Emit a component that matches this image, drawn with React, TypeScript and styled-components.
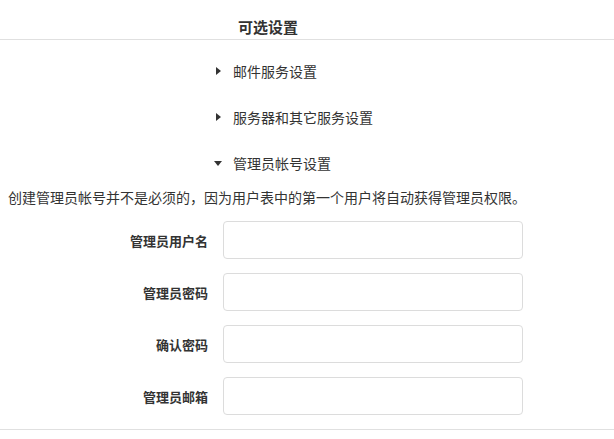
import React, { FC } from "react";
import styled, { createGlobalStyle } from "styled-components";

const GlobalStyle = createGlobalStyle`
  body {
    margin: 0;
    background: #fff;
    color: #333;
    font-family: "Noto Sans CJK SC", "Noto Sans", sans-serif;
    font-size: 14px;
  }
`;

const Page = styled.div`
  width: 614px;
`;

const Header = styled.div`
  padding: 16px 0 1px 238px;
  line-height: 22px;
  font-size: 15px;
  font-weight: 700;
  color: #333;
  border-bottom: 1px solid #e0e0e0;
`;

const SectionList = styled.ul`
  list-style: none;
  margin: 0;
  padding: 8px 0 0 213px;
`;

const SectionItem = styled.li`
  display: flex;
  align-items: center;
  height: 46px;
  line-height: 20px;
  cursor: pointer;
`;

const Caret = styled.span`
  display: inline-flex;
  align-items: center;
  justify-content: center;
  width: 10px;
  margin-right: 10px;
`;

const Description = styled.p`
  margin: 1px 0 0;
  padding-left: 8px;
  line-height: 20px;
`;

const Form = styled.div`
  display: flex;
  flex-direction: column;
  gap: 14px;
  padding: 14px 0 14px 8px;
  border-bottom: 1px solid #e0e0e0;
`;

const Row = styled.label`
  display: flex;
  align-items: center;
`;

const Label = styled.span`
  width: 200px;
  padding-right: 15px;
  text-align: right;
  font-size: 13px;
  font-weight: 700;
  color: #333;
`;

const Input = styled.input`
  box-sizing: border-box;
  width: 300px;
  height: 38px;
  border: 1px solid #dcdcdc;
  border-radius: 4px;
  padding: 0 10px;
  background: #fff;
  font: inherit;
  outline: none;
`;

const sections = [
  { title: "邮件服务设置", open: false },
  { title: "服务器和其它服务设置", open: false },
  { title: "管理员帐号设置", open: true },
];

const fields = [
  { label: "管理员用户名", type: "text" },
  { label: "管理员密码", type: "password" },
  { label: "确认密码", type: "password" },
  { label: "管理员邮箱", type: "email" },
];

const CaretIcon: FC<{ open: boolean }> = ({ open }) =>
  open ? (
    <svg width="8" height="5" viewBox="0 0 8 5">
      <path d="M0 0h8L4 5z" fill="#333" />
    </svg>
  ) : (
    <svg width="5" height="8" viewBox="0 0 5 8">
      <path d="M0 0l5 4-5 4z" fill="#333" />
    </svg>
  );

const App: FC = () => (
  <Page>
    <GlobalStyle />
    <Header>可选设置</Header>
    <SectionList>
      {sections.map((s) => (
        <SectionItem key={s.title}>
          <Caret>
            <CaretIcon open={s.open} />
          </Caret>
          {s.title}
        </SectionItem>
      ))}
    </SectionList>
    <Description>
      创建管理员帐号并不是必须的，因为用户表中的第一个用户将自动获得管理员权限。
    </Description>
    <Form>
      {fields.map((f) => (
        <Row key={f.label}>
          <Label>{f.label}</Label>
          <Input type={f.type} />
        </Row>
      ))}
    </Form>
  </Page>
);

export default App;
